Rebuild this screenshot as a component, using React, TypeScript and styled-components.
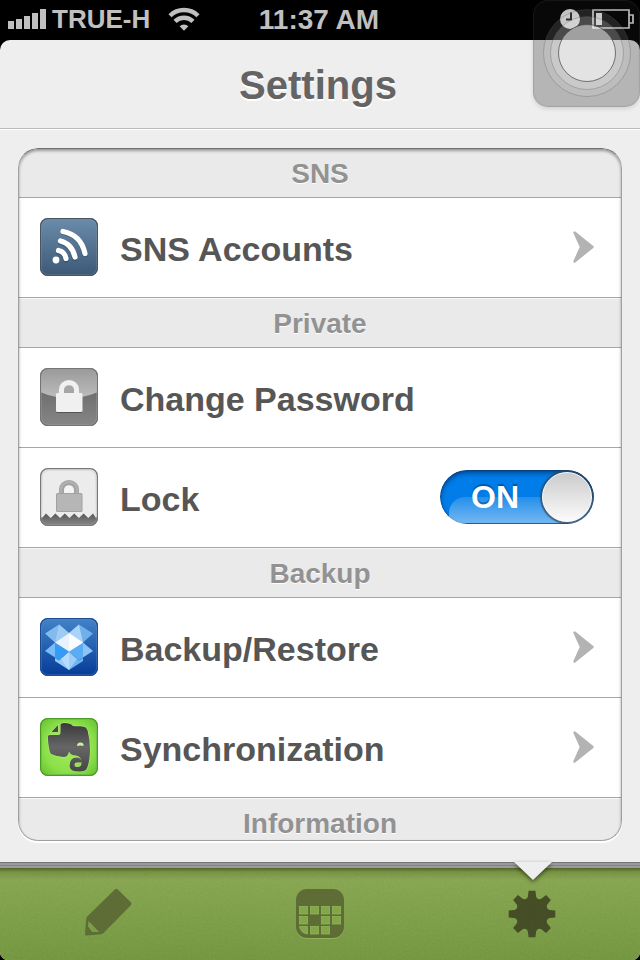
import React, { useState } from "react";
import styled, { createGlobalStyle } from "styled-components";

const GlobalStyle = createGlobalStyle`
  * { box-sizing: border-box; }
  body {
    margin: 0;
    background: #000;
    font-family: "Liberation Sans", Arial, Helvetica, sans-serif;
    font-weight: bold;
  }
  h1, h2, ul { margin: 0; padding: 0; font: inherit; list-style: none; }
  svg { display: block; flex: none; }
`;

const Phone = styled.div`
  position: relative;
  display: flex;
  flex-direction: column;
  height: 100vh;
`;

const StatusBar = styled.div`
  display: grid;
  grid-template-columns: 1fr auto 1fr;
  align-items: center;
  height: 40px;
  flex: none;
  padding: 0 6px 0 8px;
  color: #c0c0c0;
  font-size: 28px;
`;

const StatusGroup = styled.div<{ $end?: boolean }>`
  display: flex;
  align-items: center;
  justify-content: ${(p) => (p.$end ? "flex-end" : "flex-start")};
  gap: ${(p) => (p.$end ? "12px" : "0")};
  padding-bottom: 2px;
`;

const Carrier = styled.span`
  margin: 0 18px 0 6px;
  font-size: 26px;
`;

const Time = styled.span`
  padding-right: 4px;
`;

const Screen = styled.main`
  display: flex;
  flex-direction: column;
  flex: 1;
  min-height: 0;
  background: #eee;
  border-radius: 10px 10px 8px 8px;
  overflow: hidden;
`;

const Header = styled.header`
  display: flex;
  align-items: center;
  justify-content: center;
  height: 89px;
  flex: none;
  border-bottom: 1px solid #bababa;
  box-shadow: 0 1px 0 #fff;
`;

const Title = styled.h1`
  padding: 2px 4px 0 0;
  color: #646464;
  font-size: 40px;
  line-height: 48px;
  text-shadow: 0 2px 0 #fff;
`;

const Card = styled.div`
  position: relative;
  display: flex;
  flex: 1;
  min-height: 0;
  margin: 19px 18px 21px;
  border-radius: 20px;
  overflow: hidden;
  box-shadow: 0 2px 1px #fff;

  &::after {
    content: "";
    position: absolute;
    inset: 0;
    border: 1px solid #a0a0a0;
    border-top-color: #6d6d6d;
    border-radius: 20px;
    box-shadow: inset 0 2px 3px rgba(0, 0, 0, 0.35);
    pointer-events: none;
  }
`;

const Scroller = styled.div`
  flex: 1;
  overflow-y: auto;
  scrollbar-width: none;
  background: #eaeaea;
`;

const SectionTitle = styled.h2`
  height: 50px;
  padding-top: 2px;
  border-bottom: 1px solid #a6a6a6;
  background: #eaeaea;
  box-shadow: inset 0 1px 0 #f6f6f6;
  color: #929292;
  font-size: 28px;
  line-height: 48px;
  text-align: center;
  text-shadow: 0 1px 0 #fff;
`;

const Row = styled.li`
  display: flex;
  height: 100px;
  border-bottom: 1px solid #a6a6a6;
  background: #fff;
`;

const RowLink = styled.a`
  display: flex;
  flex: 1;
  align-items: center;
  padding: 0 28px 2px 22px;
  color: #565656;
  text-decoration: none;
`;

const RowLabel = styled.label`
  display: flex;
  flex: 1;
  align-items: center;
  padding: 0 28px 2px 22px;
  color: #565656;
`;

const RowText = styled.span`
  flex: 1;
  padding: 4px 0 0 22px;
  font-size: 34px;
  line-height: 40px;
`;

const Switch = styled.span`
  position: relative;
  width: 154px;
  height: 54px;
  border-radius: 27px;
  overflow: hidden;
`;

const SwitchInput = styled.input`
  position: absolute;
  inset: 0;
  width: 100%;
  height: 100%;
  margin: 0;
  opacity: 0;
  z-index: 1;
`;

const SwitchTrack = styled.span<{ $on: boolean }>`
  display: flex;
  flex-direction: ${(p) => (p.$on ? "row" : "row-reverse")};
  align-items: center;
  height: 100%;
  padding: 2px;
  border-radius: 27px;
  color: ${(p) => (p.$on ? "#fff" : "#808080")};
  background: ${(p) => (p.$on ? "#007de8" : "#eee")};
  box-shadow: inset 0 3px 5px rgba(0, 20, 60, 0.55), inset 0 0 1px 1px rgba(40, 60, 90, 0.3);

  &::before {
    content: "";
    position: absolute;
    left: 9px;
    right: 0;
    bottom: 1px;
    height: 26px;
    border-radius: 16px 0 0 0;
    background: linear-gradient(rgba(255, 255, 255, 0.14), rgba(255, 255, 255, 0.45));
  }
`;

const SwitchText = styled.span`
  position: relative;
  flex: 1;
  padding-left: 6px;
  font-size: 32px;
  line-height: 36px;
  text-align: center;
  text-shadow: 0 -2px 1px rgba(0, 50, 110, 0.5);
`;

const Knob = styled.span`
  position: relative;
  width: 50px;
  height: 50px;
  border: 1px solid #fbfbfb;
  border-radius: 25px;
  background: linear-gradient(#cbcbcb, #fbfbfb);
  box-shadow: 0 0 1px 2px rgba(60, 65, 75, 0.7);
`;

const TabArea = styled.nav`
  position: relative;
  flex: none;
  border-top: 6px solid #929292;
  background: linear-gradient(#89a850, #71963c);
`;

const TopShade = styled.span`
  position: absolute;
  top: -6px;
  left: 0;
  right: 0;
  height: 18px;
  background: linear-gradient(
    #747474 0 1px, #9a9a9c 1px 3px, #858587 3px 4px, #9b9b9d 4px 6px,
    rgba(50, 65, 15, 0.65) 6px, rgba(60, 80, 20, 0.25) 10px, rgba(60, 80, 20, 0) 18px
  );
`;

const Grain = styled.svg`
  position: absolute;
  inset: 0;
  width: 100%;
  height: 100%;
  opacity: 0.1;
`;

const Tabs = styled.ul`
  position: relative;
  display: grid;
  grid-template-columns: repeat(3, 1fr);
`;

const Tab = styled.button<{ $active?: boolean }>`
  display: flex;
  justify-content: center;
  width: 100%;
  height: 92px;
  padding: 20px 0 0;
  border: 0;
  background: none;
  color: ${(p) => (p.$active ? "#454e26" : "#5d6d35")};
`;

const Notch = styled.svg`
  position: absolute;
  top: -6px;
  left: 83.333%;
  margin-left: -24px;
  overflow: visible;
  filter: drop-shadow(0 2px 2px rgba(30, 40, 10, 0.7));
`;

const Assist = styled.button`
  position: absolute;
  top: 0;
  right: 0;
  width: 107px;
  height: 107px;
  padding: 0;
  border: 0;
  border-radius: 15px;
  background: rgba(30, 30, 30, 0.27);
  box-shadow: inset 0 0 1px 1px rgba(90, 90, 90, 0.2), 0 2px 4px rgba(0, 0, 0, 0.12);
`;

function Signal() {
  return (
    <svg width="38" height="20" fill="#c0c0c0" aria-label="Signal">
      <path d="M0 12h6v8H0zM8 10h6v10H8zM16 7h6v13h-6zM24 4h6v16h-6zM32 0h6v20h-6z" />
    </svg>
  );
}

function Wifi() {
  return (
    <svg width="32" height="24" viewBox="0 0 32 24" aria-label="Wi-Fi">
      <path d="M2 8.700a20 20 0 0 1 28 0M7 14.400a13 13 0 0 1 18 0" fill="none" stroke="#c0c0c0" strokeWidth="4.400" />
      <path d="M16 23.800l-4.400-4.600a6.400 6.400 0 0 1 8.800 0z" fill="#c0c0c0" />
    </svg>
  );
}

function Clock() {
  return (
    <svg width="20" height="20" aria-label="Alarm">
      <circle cx="10" cy="10" r="10" fill="#fff" />
      <path d="M11 3.500v7H6" fill="none" stroke="#111" strokeWidth="2" />
    </svg>
  );
}

function Battery() {
  return (
    <svg width="42" height="20" aria-label="Battery low">
      <path d="M1 1h36v5h4v8h-4v5H1zM37 6v8" fill="none" stroke="#f4f4f4" strokeWidth="1.700" />
      <path d="M4 4h6v12H4z" fill="#fff" />
    </svg>
  );
}

function Tile({ id, top, bottom, edge, children }: {
  id: string; top: string; bottom: string; edge: string; children: React.ReactNode;
}) {
  return (
    <svg width="58" height="58" viewBox="0 0 58 58" aria-hidden="true">
      <defs>
        <linearGradient id={id} x1="0" y1="0" x2="0" y2="1">
          <stop stopColor={top} />
          <stop offset="1" stopColor={bottom} />
        </linearGradient>
        <clipPath id={id + "-clip"}><rect width="58" height="58" rx="8" /></clipPath>
      </defs>
      <rect width="58" height="58" rx="8" fill={`url(#${id})`} />
      <g clipPath={`url(#${id}-clip)`}>{children}</g>
      <rect x="1.500" y="1.500" width="55" height="55" rx="6.500" fill="none" stroke="#fff" strokeOpacity=".15" />
      <rect x=".6" y=".6" width="56.800" height="56.800" rx="7.500" fill="none" stroke={edge} strokeWidth="1.200" />
    </svg>
  );
}

function FeedIcon() {
  return (
    <Tile id="feed" top="#6b8cab" bottom="#3c5876" edge="#4a545e">
      <g fill="none" strokeWidth="5.200" strokeLinecap="round">
        <path stroke="#24384e" strokeOpacity=".4" d="M23 14.500Q41 18 45 36.500M20.500 24.500Q32 27.500 35 40.500M18.500 34Q25 35.500 26 42" />
        <path stroke="#fff" d="M23 13.500Q41 17 45 35.500M20.500 23Q32 26 35 39M18.500 32.500Q25 34 26 40.500" />
      </g>
      <circle cx="16" cy="42" r="3.400" fill="#fff" />
    </Tile>
  );
}

function Padlock({ fill, hole }: { fill: string; hole: string }) {
  return (
    <>
      <path d="M19 26v-4.500a10 9.500 0 0 1 20 0V26z" fill={fill} />
      <path d="M24 25v-3.500a5 4.300 0 0 1 10 0V25z" fill={hole} />
      <rect x="16" y="25" width="26.500" height="19" rx="1.500" fill={fill} />
    </>
  );
}

function PasswordIcon() {
  return (
    <Tile id="password" top="#999999" bottom="#6f6f6f" edge="#757575">
      <defs>
        <linearGradient id="gloss" x1="0" y1="0" x2="0" y2="1">
          <stop stopColor="#999" />
          <stop offset="1" stopColor="#bdbdbd" />
        </linearGradient>
        <linearGradient id="steel" x1="0" y1="0" x2="0" y2="1">
          <stop stopColor="#6c6c6c" />
          <stop offset="1" stopColor="#868686" />
        </linearGradient>
      </defs>
      <path d="M0 20h58v38H0z" fill="url(#steel)" />
      <path d="M0 0h58v24Q44 30 29 30T0 24z" fill="url(#gloss)" />
      <path d="M16.500 44h25.500v1h-25.500z" fill="#555" />
      <Padlock fill="#f0f0f0" hole="#a6a6a6" />
    </Tile>
  );
}

function LockIcon() {
  return (
    <Tile id="lock" top="#dedede" bottom="#e8e8e8" edge="#787878">
      <defs>
        <linearGradient id="teeth" x1="0" y1="0" x2="0" y2="1">
          <stop stopColor="#585858" />
          <stop offset="1" stopColor="#8a8a8a" />
        </linearGradient>
      </defs>
      <rect x="3" y="3" width="52" height="55" rx="6" fill="#ececec" />
      <path
        d="M0 47l2 3 4-4.500 4.700 4.500 4.700-4.500 4.700 4.500 4.700-4.500 4.700 4.500 4.700-4.500 4.700 4.500 4.700-4.500 4.700 4.500 4.700-4.500L56 50l2-3v11H0z"
        fill="url(#teeth)"
      />
      <Padlock fill="#a2a2a2" hole="#f4f4f4" />
      <path d="M21 25v-3.500a8 7.500 0 0 1 16 0V25" fill="none" stroke="#b0b0b0" strokeWidth="2.500" />
      <rect x="17" y="26" width="24.500" height="17" rx="1" fill="#b6b6b6" />
    </Tile>
  );
}

function DropboxIcon() {
  return (
    <Tile id="box" top="#4384c8" bottom="#053b97" edge="#1e4c90">
      <path d="M5 15.500L19 6.500l10 8.500-14 9.500z" fill="#83bbee" />
      <path d="M19 6.500l10 8.500-14 9.500z" fill="#9dcbf4" />
      <path d="M53 15.500L39 6.500 29 15l14 9.500z" fill="#6fafeb" />
      <path d="M39 6.500L29 15l14 9.500z" fill="#a9d3f8" />
      <path d="M15 24.500L5 33l14 9 10-8.500z" fill="#78bcf8" />
      <path d="M15 24.500V39.500l4 2.500 10-8.500z" fill="#369bf4" />
      <path d="M43 24.500L53 33l-14 9-10-8.500z" fill="#8bc5f7" />
      <path d="M43 24.500v15L39 42l-10-8.500z" fill="#5aacf4" />
      <path d="M29 15l14 9.500-14 9-14-9z" fill="#e7f3fe" />
      <path d="M29 15v18.500l14-9z" fill="#fafdff" />
      <path d="M29 34v18L15 43v-3l4 2.500z" fill="#94cbfa" />
      <path d="M29 34v18l14-9v-3l-4 2.500z" fill="#6db5f3" />
      <path d="M29 34v18l-8-11z" fill="#b6dcfc" />
      <path d="M29 34v18l8-11z" fill="#9bcff9" />
    </Tile>
  );
}

function EvernoteIcon() {
  return (
    <Tile id="note" top="#69c435" bottom="#63be30" edge="#4b9a26">
      <defs>
        <radialGradient id="leaf" r=".7">
          <stop stopColor="#a4ed5c" />
          <stop offset=".65" stopColor="#8ce04a" />
          <stop offset="1" stopColor="#66c530" />
        </radialGradient>
        <linearGradient id="hide" x1="0" y1="0" x2="0" y2="1">
          <stop stopColor="#3a3a3a" />
          <stop offset=".5" stopColor="#666" />
          <stop offset="1" stopColor="#444744" />
        </linearGradient>
      </defs>
      <rect x="2" y="2" width="54" height="54" rx="7" fill="url(#leaf)" />
      <path
        d="M20.500 6.500Q21 5 24 5q7 0 9 3 4 .5 8 .3 6 .2 6.800 5Q50 22 50 31q0 11-2.500 18-1.500 4.500-7 4.500-11 .5-11-5.500 0-8.500 7-8.500 5 0 5 5h-4.500q-2.500 0-2.500 2.300t3 2.200q4 0 4-4.500 0-6-5.500-7-5.500 0-7-4-1 5.500-5.500 5.500-6 0-12.500-3Q8.500 33 7.800 18.500q0-1.500 2-1.500H18q2.500 0 2.500-2.500z"
        fill="url(#hide)" stroke="#b7f37c" strokeWidth="1" paintOrder="stroke"
      />
      <path d="M10.500 14.500L18.500 6v8.500z" fill="#454c43" stroke="#b9f37c" strokeWidth=".8" />
      <path d="M37 28q0-3.500 3.500-3.500t3 3.500q-3-1-6.500 0z" fill="#c8f69b" />
    </Tile>
  );
}

function Chevron() {
  return (
    <svg width="22" height="34" viewBox="0 0 22 34" aria-hidden="true">
      <path d="M2.500 2.500L20.500 17l-18 14.500L9 17z" fill="#b3b3b3" stroke="#b3b3b3" strokeWidth="2.400" strokeLinejoin="round" />
    </svg>
  );
}

function PencilIcon() {
  return (
    <svg width="50" height="50" viewBox="-2 0 50 50" fill="currentColor">
      <path
        fillRule="evenodd"
        d="M30.800 1.500q1.500-1.500 3 0l13 12.700q1.500 1.500 0 3L19.500 45q-1 1-2.300 1.200L3 47.600Q1 47.700 1 46l1.200-15q.1-1.500 1-2.400zM4.500 33L4 38.500 8.200 44l7 .1z"
      />
    </svg>
  );
}

const calendarCells = [
  [3, 17], [14, 17], [25, 17], [36, 17],
  [3, 27], [25, 27], [36, 27],
  [14, 37], [25, 37],
];

function CalendarIcon() {
  return (
    <svg width="48" height="52" viewBox="0 -1 48 52">
      <rect y="1" width="48" height="49" rx="11" fill="#91b257" />
      <rect width="48" height="49" rx="11" fill="currentColor" />
      <g fill="#84a64b" stroke="#91b658" strokeWidth=".8">
        {calendarCells.map(([x, y]) => (
          <rect key={`${x}-${y}`} x={x + 0.5} y={y + 0.5} width="8" height="7.500" />
        ))}
        <path d="M3.500 37.500h8V45q-7-1-8-7.500z" />
      </g>
    </svg>
  );
}

function GearIcon() {
  return (
    <svg width="50" height="52" viewBox="-24 -26 50 52" fill="currentColor">
      <circle r="16.200" />
      {[0, 45, 90, 135, 180, 225, 270, 315].map((angle) => (
        <path key={angle} transform={`rotate(${angle})`} d="M-3.400-23.300h6.800l.7 5.500q.2 1.600 1.400 2.400L0 0l-5.500-15.400q1.200-.8 1.400-2.400z" />
      ))}
    </svg>
  );
}

function LinkRow({ icon, text, chevron = true }: { icon: React.ReactNode; text: string; chevron?: boolean }) {
  return (
    <Row>
      <RowLink href="#">
        {icon}
        <RowText>{text}</RowText>
        {chevron && <Chevron />}
      </RowLink>
    </Row>
  );
}

export default function App() {
  const [locked, setLocked] = useState(true);
  return (
    <Phone>
      <GlobalStyle />
      <StatusBar>
        <StatusGroup>
          <Signal />
          <Carrier>TRUE-H</Carrier>
          <Wifi />
        </StatusGroup>
        <Time>11:37 AM</Time>
        <StatusGroup $end>
          <Clock />
          <Battery />
        </StatusGroup>
      </StatusBar>
      <Screen>
        <Header>
          <Title>Settings</Title>
        </Header>
        <Card>
          <Scroller>
            <SectionTitle>SNS</SectionTitle>
            <ul>
              <LinkRow icon={<FeedIcon />} text="SNS Accounts" />
            </ul>
            <SectionTitle>Private</SectionTitle>
            <ul>
              <LinkRow icon={<PasswordIcon />} text="Change Password" chevron={false} />
              <Row>
                <RowLabel>
                  <LockIcon />
                  <RowText>Lock</RowText>
                  <Switch>
                    <SwitchInput
                      type="checkbox"
                      role="switch"
                      checked={locked}
                      onChange={(e) => setLocked(e.target.checked)}
                    />
                    <SwitchTrack $on={locked}>
                      <SwitchText>{locked ? "ON" : "OFF"}</SwitchText>
                      <Knob />
                    </SwitchTrack>
                  </Switch>
                </RowLabel>
              </Row>
            </ul>
            <SectionTitle>Backup</SectionTitle>
            <ul>
              <LinkRow icon={<DropboxIcon />} text="Backup/Restore" />
              <LinkRow icon={<EvernoteIcon />} text="Synchronization" />
            </ul>
            <SectionTitle>Information</SectionTitle>
          </Scroller>
        </Card>
        <TabArea>
          <Grain aria-hidden="true">
            <filter id="grain">
              <feTurbulence type="fractalNoise" baseFrequency=".45" numOctaves="2" />
              <feColorMatrix type="saturate" values="0" />
            </filter>
            <rect width="100%" height="100%" filter="url(#grain)" />
          </Grain>
          <TopShade />
          <Tabs>
            <li><Tab aria-label="Write"><PencilIcon /></Tab></li>
            <li><Tab aria-label="Calendar"><CalendarIcon /></Tab></li>
            <li><Tab $active aria-label="Settings"><GearIcon /></Tab></li>
          </Tabs>
          <Notch width="48" height="20" aria-hidden="true">
            <path d="M5 0h38L24 18z" fill="#eee" />
          </Notch>
        </TabArea>
      </Screen>
      <Assist aria-label="AssistiveTouch">
        <svg width="107" height="107" stroke="#555" strokeOpacity=".3">
          <circle cx="54" cy="53" r="43.500" fill="#fff" fillOpacity=".11" />
          <circle cx="54" cy="53" r="36.500" fill="#fff" fillOpacity=".18" />
          <circle cx="54" cy="53" r="28.500" fill="#fff" fillOpacity=".48" stroke="#444" strokeOpacity=".7" />
        </svg>
      </Assist>
    </Phone>
  );
}
